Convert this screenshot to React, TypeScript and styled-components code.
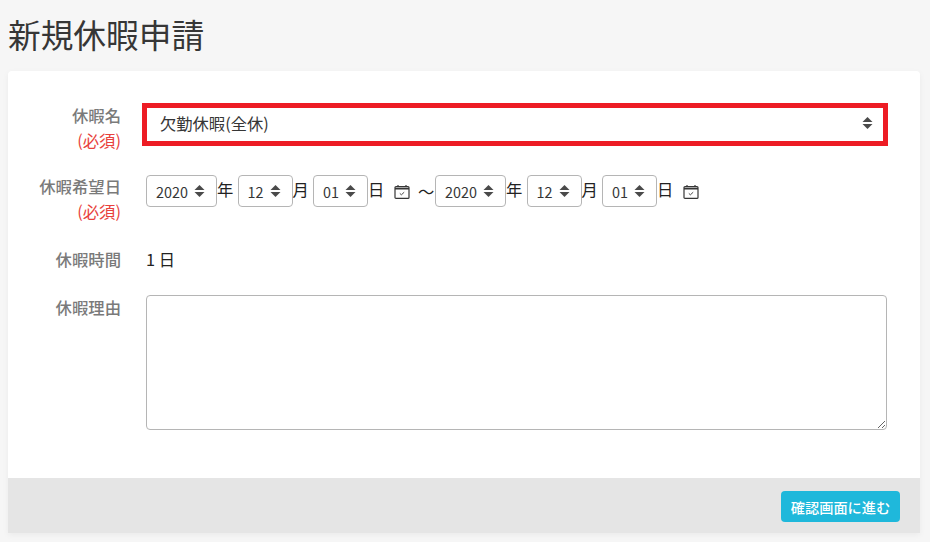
import styled, { createGlobalStyle } from "styled-components";

const GlobalStyle = createGlobalStyle`
  html, body {
    margin: 0;
    padding: 0;
    background: #f6f6f6;
    font-family: "Noto Sans CJK JP", "Noto Sans", sans-serif;
    color: #363636;
  }
`;

const Page = styled.div`
  width: 930px;
  height: 542px;
  padding: 0 10px 0 8px;
  box-sizing: border-box;
  overflow: hidden;
`;

const Title = styled.h1`
  margin: 0;
  padding-top: 10px;
  height: 71px;
  box-sizing: border-box;
  font-size: 32.7px;
  line-height: 48px;
  font-weight: 400;
  color: #363636;
`;

const Card = styled.div`
  background: #fff;
  border-radius: 4px 4px 0 0;
  box-shadow: 0 2px 6px rgba(0, 0, 0, 0.05);
  overflow: hidden;
`;

const FormBody = styled.div`
  padding: 32px 33px 48px 0;
  display: flex;
  flex-direction: column;
`;

const Row = styled.div<{ $height: number }>`
  display: grid;
  grid-template-columns: 113px 1fr;
  column-gap: 25px;
  height: ${(p) => p.$height}px;
`;

const Label = styled.div`
  text-align: right;
  font-size: 16.35px;
  line-height: 25px;
  color: #7a7a7a;
  font-weight: 500;
`;

const Required = styled.div`
  color: #e8413c;
  font-weight: 400;
`;

const NameSelect = styled.div`
  display: flex;
  align-items: center;
  justify-content: space-between;
  box-sizing: border-box;
  height: 43px;
  width: 746px;
  margin-left: -4px;
  padding: 0 10px 4px 13px;
  border: 5px solid #ed1c24;
  font-size: 16.3px;
  color: #363636;
  background: #fff;
`;

const DateRow = styled.div`
  display: flex;
  align-items: center;
  height: 32px;
  margin-top: 1px;
  font-size: 16.3px;
  color: #222;
`;

const SmallSelect = styled.div<{ $width: number }>`
  display: flex;
  align-items: center;
  justify-content: space-between;
  box-sizing: border-box;
  width: ${(p) => p.$width}px;
  height: 32px;
  padding: 0 11px 0 9px;
  border: 1px solid #b5b5b5;
  border-radius: 4px;
  font-size: 14.4px;
  color: #363636;
  background: #fff;
`;

const Unit = styled.span<{ $gap?: number }>`
  width: ${(p) => p.$gap ?? 20.5}px;
  flex: none;
  line-height: 28px;
  align-self: flex-start;
`;

const CalendarButton = styled.span`
  display: flex;
  margin: 2px 8px 0 8px;
  color: #363636;
`;

const Tilde = styled.span`
  width: 17px;
  flex: none;
`;

const Value = styled.div`
  font-size: 16.3px;
  line-height: 25px;
  color: #222;
`;

const Memo = styled.textarea`
  display: block;
  box-sizing: border-box;
  width: 741px;
  height: 135px;
  border: 1px solid #b5b5b5;
  border-radius: 4px;
  background: #fff;
  resize: vertical;
  outline: none;
`;

const Footer = styled.div`
  display: flex;
  justify-content: flex-end;
  align-items: center;
  height: 55px;
  padding: 2px 20px 0 0;
  box-sizing: border-box;
  background: #e5e5e5;
`;

const SubmitButton = styled.button`
  height: 31px;
  width: 119px;
  padding: 0;
  border: none;
  border-radius: 4px;
  background: #1fb8db;
  color: #fff;
  font-family: inherit;
  font-size: 14.2px;
  font-weight: 500;
`;

const Arrows = () => (
  <svg width="11" height="14" viewBox="0 0 11 14" fill="#4a4a4a">
    <path d="M5.5 1 L10.5 6 H0.5 Z" />
    <path d="M0.5 8 H10.5 L5.5 13 Z" />
  </svg>
);

const CalendarIcon = () => (
  <svg width="16" height="16" viewBox="0 0 16 16" fill="none" stroke="currentColor" strokeWidth="1.2">
    <rect x="1" y="2.6" width="14" height="11.8" rx="1" />
    <path d="M1 4.6 H15" strokeWidth="1.8" />
    <path d="M4 1 V3 M12 1 V3" />
    <path d="M5.8 9.4 L7.4 10.8 L10.2 8.2" strokeWidth="0.9" />
  </svg>
);

const DateGroup = ({ withTilde }: { withTilde?: boolean }) => (
  <>
    <SmallSelect $width={71}>2020<Arrows /></SmallSelect>
    <Unit>年</Unit>
    <SmallSelect $width={55}>12<Arrows /></SmallSelect>
    <Unit>月</Unit>
    <SmallSelect $width={55}>01<Arrows /></SmallSelect>
    <Unit $gap={18}>日</Unit>
    <CalendarButton><CalendarIcon /></CalendarButton>
    {withTilde && <Tilde>〜</Tilde>}
  </>
);

export default function App() {
  return (
    <Page>
      <GlobalStyle />
      <Title>新規休暇申請</Title>
      <Card>
        <FormBody>
          <Row $height={71}>
            <Label>休暇名<Required>(必須)</Required></Label>
            <NameSelect>欠勤休暇(全休)<Arrows /></NameSelect>
          </Row>
          <Row $height={73}>
            <Label>休暇希望日<Required>(必須)</Required></Label>
            <DateRow>
              <DateGroup withTilde />
              <DateGroup />
            </DateRow>
          </Row>
          <Row $height={48}>
            <Label>休暇時間</Label>
            <Value>1 日</Value>
          </Row>
          <Row $height={135}>
            <Label>休暇理由</Label>
            <Memo />
          </Row>
        </FormBody>
        <Footer>
          <SubmitButton>確認画面に進む</SubmitButton>
        </Footer>
      </Card>
    </Page>
  );
}
